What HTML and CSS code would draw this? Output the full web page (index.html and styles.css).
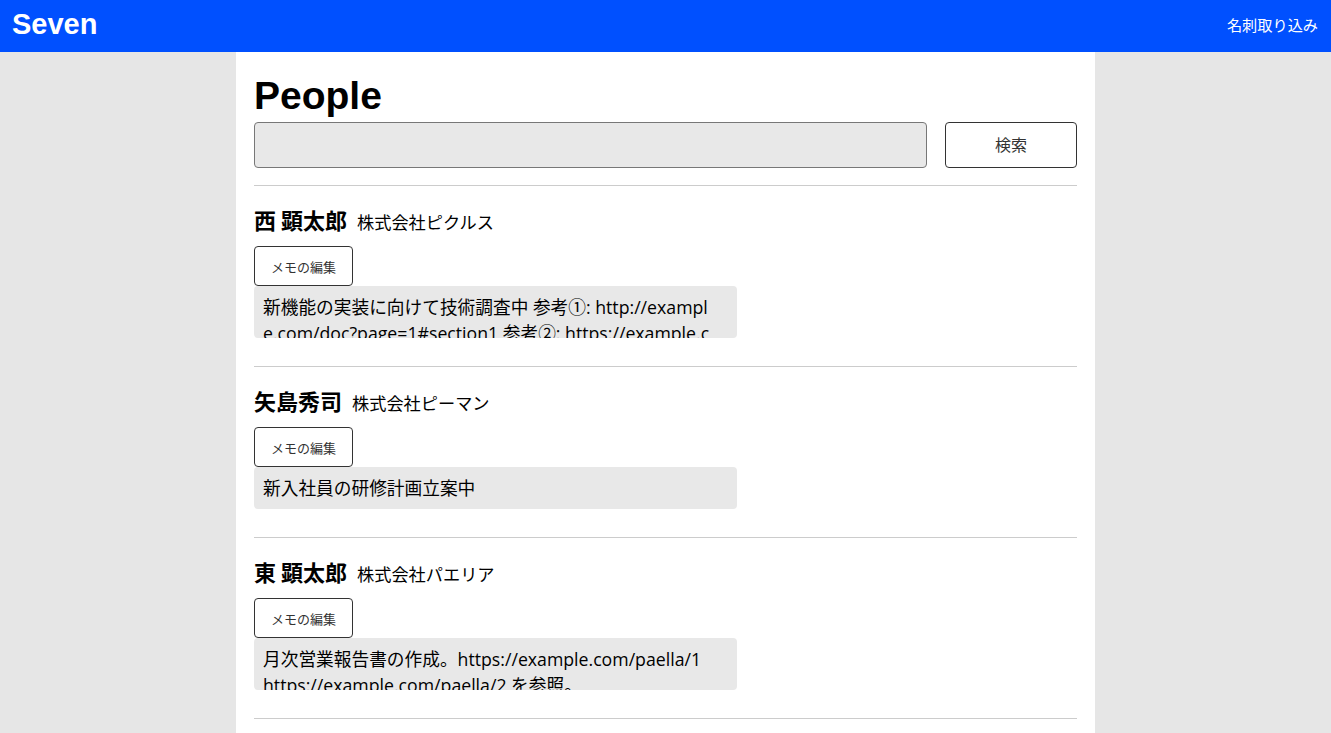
FILE: index.html
```html
<!DOCTYPE html>
<html lang="ja">
<head>
<meta charset="utf-8">
<title>Seven</title>
<link rel="stylesheet" href="styles.css">
</head>
<body>
<header class="topbar">
  <div class="logo">Seven</div>
  <a class="import-link">名刺取り込み</a>
</header>
<main class="page">
  <h1 class="title">People</h1>
  <div class="search">
    <input class="search-input" type="text">
    <button class="search-btn">検索</button>
  </div>
  <ul class="people">
    <li class="person">
      <div class="person-head"><span class="name">西 顕太郎</span><span class="company">株式会社ピクルス</span></div>
      <button class="memo-btn">メモの編集</button>
      <div class="memo">新機能の実装に向けて技術調査中 参考①: http://example.com/doc?page=1#section1 参考②: https://example.com/doc?page=2#section2</div>
    </li>
    <li class="person">
      <div class="person-head"><span class="name">矢島秀司</span><span class="company">株式会社ピーマン</span></div>
      <button class="memo-btn">メモの編集</button>
      <div class="memo">新入社員の研修計画立案中</div>
    </li>
    <li class="person">
      <div class="person-head"><span class="name">東 顕太郎</span><span class="company">株式会社パエリア</span></div>
      <button class="memo-btn">メモの編集</button>
      <div class="memo">月次営業報告書の作成。https://example.com/paella/1 https://example.com/paella/2 を参照。</div>
    </li>
  </ul>
</main>
</body>
</html>
```
FILE: styles.css
```css
* { box-sizing: border-box; }
html, body { margin: 0; padding: 0; height: 100%; }
body {
  background: #e6e6e6;
  font-family: "Liberation Sans", "Noto Sans CJK JP", sans-serif;
  color: #000;
}
.topbar {
  height: 52px;
  background: #0050ff;
  color: #fff;
  display: flex;
  align-items: center;
  justify-content: space-between;
  padding: 0 13px 0 12px;
}
.logo {
  font-size: 29px;
  font-weight: bold;
  margin-top: -4px;
}
.import-link {
  font-size: 15.2px;
  color: #fff;
  margin-top: -5px;
}
.page {
  width: 859px;
  margin: 0 auto;
  background: #fff;
  min-height: calc(100% - 52px);
  padding: 23px 18px 0;
}
.title {
  margin: 0;
  font-size: 39px;
  line-height: 42px;
  font-weight: bold;
}
.search {
  display: flex;
  gap: 18px;
  margin-top: 5px;
  padding-bottom: 17px;
  border-bottom: 1px solid #cccccc;
}
.search-input {
  flex: 1;
  height: 46px;
  background: #e8e8e8;
  border: 1px solid #777;
  border-radius: 4px;
  font-size: 16px;
}
.search-btn {
  width: 132px;
  height: 46px;
  background: #fff;
  border: 1px solid #333;
  border-radius: 4px;
  font-family: "Noto Sans CJK JP", sans-serif;
  font-size: 16px;
  line-height: 20px;
  padding: 0 0 3px;
  color: #333;
}
.people { list-style: none; margin: 0; padding: 0; }
.person {
  padding: 18px 0 28px;
  border-bottom: 1px solid #cccccc;
}
.person-head {
  height: 32px;
  display: flex;
  align-items: baseline;
  line-height: 30px;
}
.name {
  font-family: "Noto Sans CJK JP", sans-serif;
  font-weight: bold;
  font-size: 22px;
}
.company {
  font-family: "Noto Sans CJK JP", sans-serif;
  font-size: 17.2px;
  margin-left: 10px;
}
.memo-btn {
  display: block;
  margin-top: 10px;
  width: 99px;
  height: 40px;
  background: #fff;
  border: 1px solid #333;
  border-radius: 4px;
  font-family: "Noto Sans CJK JP", sans-serif;
  font-size: 13px;
  color: #333;
  padding: 0;
}
.memo {
  width: 483px;
  max-height: 52px;
  overflow: hidden;
  background: #e8e8e8;
  border-radius: 4px;
  padding: 8px 24px 8px 9px;
  font-family: "Open Sans", "Noto Sans CJK JP", sans-serif;
  font-size: 17.7px;
  line-height: 26px;
  word-break: break-all;
}
```
